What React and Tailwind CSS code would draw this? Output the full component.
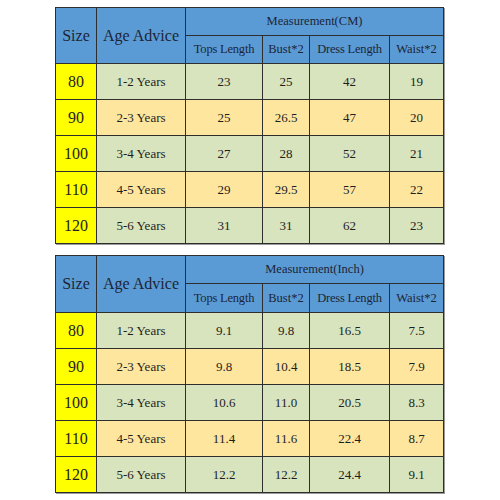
import React from 'react'

const cmRows = [
  ['80', '1-2 Years', '23', '25', '42', '19'],
  ['90', '2-3 Years', '25', '26.5', '47', '20'],
  ['100', '3-4 Years', '27', '28', '52', '21'],
  ['110', '4-5 Years', '29', '29.5', '57', '22'],
  ['120', '5-6 Years', '31', '31', '62', '23'],
]

const inchRows = [
  ['80', '1-2 Years', '9.1', '9.8', '16.5', '7.5'],
  ['90', '2-3 Years', '9.8', '10.4', '18.5', '7.9'],
  ['100', '3-4 Years', '10.6', '11.0', '20.5', '8.3'],
  ['110', '4-5 Years', '11.4', '11.6', '22.4', '8.7'],
  ['120', '5-6 Years', '12.2', '12.2', '24.4', '9.1'],
]

function SizeTable({ unit, rows, headTop, headBottom }) {
  return (
    <table className="border-collapse table-fixed w-[388px] border border-[#2e2e2e] shadow-[1px_1px_0_#9a9a9a] text-[#1e1e1e]">
      <colgroup>
        <col className="w-[41px]" />
        <col className="w-[89px]" />
        <col className="w-[77px]" />
        <col className="w-[47px]" />
        <col className="w-[80px]" />
        <col className="w-[54px]" />
      </colgroup>
      <thead className="bg-[#5b9bd5] text-[#1b2536]">
        <tr className={headTop}>
          <th rowSpan={2} className="border border-[#2e2e2e] font-normal text-[16px] p-0">Size</th>
          <th rowSpan={2} className="border border-[#2e2e2e] font-normal text-[16px] p-0">Age Advice</th>
          <th colSpan={4} className="border border-[#2e2e2e] font-normal text-[12.5px] p-0">Measurement({unit})</th>
        </tr>
        <tr className={headBottom}>
          <th className="border border-[#2e2e2e] font-normal text-[12.5px] p-0 tracking-[-0.2px]">Tops Length</th>
          <th className="border border-[#2e2e2e] font-normal text-[12.5px] p-0">Bust*2</th>
          <th className="border border-[#2e2e2e] font-normal text-[12.5px] p-0 tracking-[-0.2px]">Dress Length</th>
          <th className="border border-[#2e2e2e] font-normal text-[12.5px] p-0">Waist*2</th>
        </tr>
      </thead>
      <tbody>
        {rows.map((r, i) => (
          <tr key={r[0]} className={`h-[36px] ${i % 2 === 0 ? 'bg-[#d8e4bd]' : 'bg-[#fee69f]'}`}>
            <td className="border border-[#2e2e2e] bg-[#ffff00] text-center text-[16px] p-0">{r[0]}</td>
            {r.slice(1).map((c, j) => (
              <td key={j} className="border border-[#2e2e2e] text-center text-[13px] p-0">{c}</td>
            ))}
          </tr>
        ))}
      </tbody>
    </table>
  )
}

export default function App() {
  return (
    <div className="w-[500px] h-[500px] bg-white font-['Liberation_Serif','Times_New_Roman',serif] flex flex-col items-start pl-[55px] pt-[7px] gap-[11px]">
      <SizeTable unit="CM" rows={cmRows} headTop="h-[28px]" headBottom="h-[28px]" />
      <SizeTable unit="Inch" rows={inchRows} headTop="h-[28px]" headBottom="h-[29px]" />
    </div>
  )
}
